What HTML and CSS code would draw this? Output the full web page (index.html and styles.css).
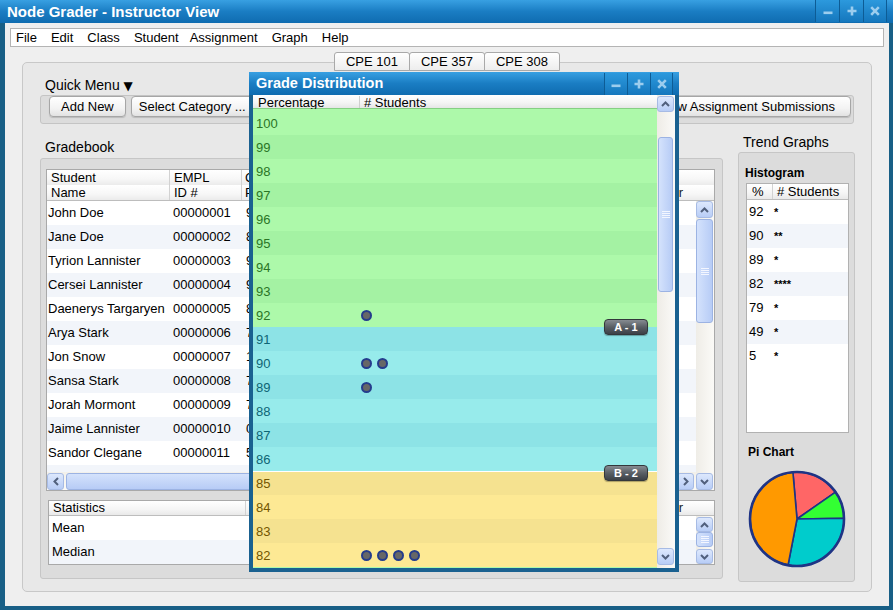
FILE: index.html
```html
<!DOCTYPE html>
<html>
<head>
<meta charset="utf-8">
<title>Node Grader - Instructor View</title>
<link rel="stylesheet" href="styles.css">
</head>
<body>
<div class="app">
  <div class="titlebar">
    <span class="title">Node Grader - Instructor View</span>
    <div class="winbtns">
      <span class="wb"><svg width="10" height="10" viewBox="0 0 10 10"><rect x="0.5" y="5.5" width="9" height="2.6" fill="#9ccdee"/></svg></span>
      <span class="wb"><svg width="10" height="10" viewBox="0 0 10 10"><path d="M5 0.5v9M0.5 5h9" stroke="#9ccdee" stroke-width="2.6"/></svg></span>
      <span class="wb"><svg width="10" height="10" viewBox="0 0 10 10"><path d="M1.2 1.2l7.6 7.6M8.8 1.2l-7.6 7.6" stroke="#9ccdee" stroke-width="2.6"/></svg></span>
    </div>
  </div>
  <div class="frame">
    <div class="menubar">
      <span>File</span><span>Edit</span><span>Class</span><span>Student</span><span class="m-assign">Assignment</span><span>Graph</span><span>Help</span>
    </div>
    <div class="tabs">
      <span class="tab">CPE 101</span><span class="tab">CPE 357</span><span class="tab">CPE 308</span>
    </div>
    <div class="panel">
      <div class="qm-label">Quick Menu <span class="tri">▼</span></div>
      <div class="qm-bar">
        <button class="btn">Add New</button>
        <button class="btn btn-cat">Select Category ...</button>
        <button class="btn btn-right">View Assignment Submissions</button>
      </div>
      <div class="columns">
        <div class="col-left">
          <div class="sec-label">Gradebook</div>
          <div class="gb-panel">
            <div class="grid">
              <div class="grid-head">
                <div class="hline"><span class="c-name">Student</span><span class="c-id">EMPL</span><span class="c-3">Course</span><span class="c-last"></span></div>
                <div class="hline hline2"><span class="c-name">Name</span><span class="c-id">ID #</span><span class="c-3">Percent</span><span class="c-last">Letter</span></div>
              </div>
              <div class="grid-body">
                <div class="rows-col">
                  <div class="rows">
                    <div class="row"><span class="r-name">John Doe</span><span class="r-id">00000001</span><span class="r-3">92</span></div>
                    <div class="row"><span class="r-name">Jane Doe</span><span class="r-id">00000002</span><span class="r-3">82</span></div>
                    <div class="row"><span class="r-name">Tyrion Lannister</span><span class="r-id">00000003</span><span class="r-3">90</span></div>
                    <div class="row"><span class="r-name">Cersei Lannister</span><span class="r-id">00000004</span><span class="r-3">90</span></div>
                    <div class="row"><span class="r-name">Daenerys Targaryen</span><span class="r-id">00000005</span><span class="r-3">82</span></div>
                    <div class="row"><span class="r-name">Arya Stark</span><span class="r-id">00000006</span><span class="r-3">79</span></div>
                    <div class="row"><span class="r-name">Jon Snow</span><span class="r-id">00000007</span><span class="r-3">100</span></div>
                    <div class="row"><span class="r-name">Sansa Stark</span><span class="r-id">00000008</span><span class="r-3">72</span></div>
                    <div class="row"><span class="r-name">Jorah Mormont</span><span class="r-id">00000009</span><span class="r-3">75</span></div>
                    <div class="row"><span class="r-name">Jaime Lannister</span><span class="r-id">00000010</span><span class="r-3">0</span></div>
                    <div class="row"><span class="r-name">Sandor Clegane</span><span class="r-id">00000011</span><span class="r-3">5</span></div>
                    <div class="row"></div>
                  </div>
                  <div class="hscroll">
                    <span class="arr arr-h"><svg width="6" height="9" viewBox="0 0 6 9"><polyline points="5,1 1.5,4.5 5,8" fill="none" stroke="#51607d" stroke-width="2"/></svg></span>
                    <span class="thumb hthumb"></span>
                    <span class="arr arr-h arr-right"><svg width="6" height="9" viewBox="0 0 6 9"><polyline points="1,1 4.5,4.5 1,8" fill="none" stroke="#51607d" stroke-width="2"/></svg></span>
                  </div>
                </div>
                <div class="vscroll">
                  <span class="arr"><svg width="9" height="6" viewBox="0 0 9 6"><polyline points="1,5 4.5,1.5 8,5" fill="none" stroke="#51607d" stroke-width="2"/></svg></span>
                  <span class="thumb vthumb"><span class="grip"></span></span>
                  <span class="arr arr-down"><svg width="9" height="6" viewBox="0 0 9 6"><polyline points="1,1 4.5,4.5 8,1" fill="none" stroke="#51607d" stroke-width="2"/></svg></span>
                </div>
              </div>
            </div>
            <div class="stats">
              <div class="stats-head"><span class="s-label">Statistics</span><span class="c-last">Letter</span></div>
              <div class="stats-body">
                <div class="stats-rows">
                  <div class="srow">Mean</div>
                  <div class="srow">Median</div>
                </div>
                <div class="svscroll">
                  <span class="arr arr-s"><svg width="9" height="6" viewBox="0 0 9 6"><polyline points="1,5 4.5,1.5 8,5" fill="none" stroke="#51607d" stroke-width="2"/></svg></span>
                  <span class="thumb sthumb"><span class="grip"></span></span>
                  <span class="arr arr-s arr-sdown"><svg width="9" height="6" viewBox="0 0 9 6"><polyline points="1,1 4.5,4.5 8,1" fill="none" stroke="#51607d" stroke-width="2"/></svg></span>
                </div>
              </div>
            </div>
          </div>
        </div>
        <div class="col-right">
          <div class="sec-label">Trend Graphs</div>
          <div class="tg-panel">
            <div class="tg-title">Histogram</div>
            <div class="hist">
              <div class="hist-head"><span class="h-pct">%</span><span class="h-num"># Students</span></div>
              <div class="hrow"><span class="h1">92</span><span class="h2">*</span></div>
              <div class="hrow"><span class="h1">90</span><span class="h2">**</span></div>
              <div class="hrow"><span class="h1">89</span><span class="h2">*</span></div>
              <div class="hrow"><span class="h1">82</span><span class="h2">****</span></div>
              <div class="hrow"><span class="h1">79</span><span class="h2">*</span></div>
              <div class="hrow"><span class="h1">49</span><span class="h2">*</span></div>
              <div class="hrow"><span class="h1">5</span><span class="h2">*</span></div>
            </div>
            <div class="tg-title pi-title">Pi Chart</div>
            <svg class="pie" width="100" height="100" viewBox="0 0 100 100">
              <g stroke="#1f3485" stroke-width="1.6" stroke-linejoin="round">
                <path d="M50 50 L45.9 3.18 A47 47 0 0 1 88.5 23.04 Z" fill="#ff6666"/>
                <path d="M50 50 L88.5 23.04 A47 47 0 0 1 97 49.18 Z" fill="#33ff33"/>
                <path d="M50 50 L97 49.18 A47 47 0 0 1 41.03 96.14 Z" fill="#00cccc"/>
                <path d="M50 50 L41.03 96.14 A47 47 0 0 1 45.9 3.18 Z" fill="#ff9900"/>
              </g>
              <circle cx="50" cy="50" r="47" fill="none" stroke="#1f3485" stroke-width="2.6"/>
            </svg>
          </div>
        </div>
      </div>
    </div>
  </div>

  <div class="dist">
    <div class="dist-title">
      <span class="dtitle">Grade Distribution</span>
      <div class="winbtns dbtns">
        <span class="wb"><svg width="10" height="10" viewBox="0 0 10 10"><rect x="0.5" y="5.5" width="9" height="2.6" fill="#9ccdee"/></svg></span>
        <span class="wb"><svg width="10" height="10" viewBox="0 0 10 10"><path d="M5 0.5v9M0.5 5h9" stroke="#9ccdee" stroke-width="2.6"/></svg></span>
        <span class="wb"><svg width="10" height="10" viewBox="0 0 10 10"><path d="M1.2 1.2l7.6 7.6M8.8 1.2l-7.6 7.6" stroke="#9ccdee" stroke-width="2.6"/></svg></span>
      </div>
    </div>
    <div class="dist-body">
      <div class="dist-main">
        <div class="dist-head"><span class="dh-pct">Percentage</span><span class="dh-num"># Students</span></div>
        <div class="dist-list">
          <div class="drow g l"><span class="pct">100</span></div>
          <div class="drow g d"><span class="pct">99</span></div>
          <div class="drow g l"><span class="pct">98</span></div>
          <div class="drow g d"><span class="pct">97</span></div>
          <div class="drow g l"><span class="pct">96</span></div>
          <div class="drow g d"><span class="pct">95</span></div>
          <div class="drow g l"><span class="pct">94</span></div>
          <div class="drow g d"><span class="pct">93</span></div>
          <div class="drow g l"><span class="pct">92</span><span class="dots"><span class="dot"></span></span></div>
          <div class="drow c d"><span class="pct">91</span></div>
          <div class="drow c l"><span class="pct">90</span><span class="dots"><span class="dot"></span><span class="dot"></span></span></div>
          <div class="drow c d"><span class="pct">89</span><span class="dots"><span class="dot"></span></span></div>
          <div class="drow c l"><span class="pct">88</span></div>
          <div class="drow c d"><span class="pct">87</span></div>
          <div class="drow c l"><span class="pct">86</span></div>
          <div class="drow y d ytop"><span class="pct">85</span></div>
          <div class="drow y l"><span class="pct">84</span></div>
          <div class="drow y d"><span class="pct">83</span></div>
          <div class="drow y l"><span class="pct">82</span><span class="dots"><span class="dot"></span><span class="dot"></span><span class="dot"></span><span class="dot"></span></span></div>
        </div>
        <span class="badge badge-a">A - 1</span>
        <span class="badge badge-b">B - 2</span>
      </div>
      <div class="dscroll">
        <span class="arr arr-d"><svg width="9" height="6" viewBox="0 0 9 6"><polyline points="1,5 4.5,1.5 8,5" fill="none" stroke="#51607d" stroke-width="2"/></svg></span>
        <span class="thumb dthumb"><span class="grip"></span></span>
        <span class="arr arr-d arr-ddown"><svg width="9" height="6" viewBox="0 0 9 6"><polyline points="1,1 4.5,4.5 8,1" fill="none" stroke="#51607d" stroke-width="2"/></svg></span>
      </div>
    </div>
  </div>
</div>
</body>
</html>
```

FILE: styles.css
```css
* { box-sizing: border-box; }

body {
  margin: 0;
  font-family: "Liberation Sans", Arial, sans-serif;
  font-size: 13px;
  color: #000;
}

.app {
  position: relative;
  width: 893px;
  height: 610px;
  background: #185f86;
  display: flex;
  flex-direction: column;
  overflow: hidden;
}

/* ---------- title bars ---------- */
.titlebar {
  height: 23px;
  flex: none;
  display: flex;
  align-items: flex-start;
  background: linear-gradient(#38a0e2, #1a7dc3 50%, #0f6cb0);
}
.title {
  flex: 1;
  color: #fff;
  font-weight: bold;
  font-size: 15px;
  line-height: 23px;
  padding-left: 7px;
}
.winbtns {
  display: flex;
  height: 22px;
  margin-right: 6px;
}
.wb {
  width: 24px;
  height: 22px;
  display: flex;
  align-items: center;
  justify-content: center;
  border-left: 1px solid #0d5c95;
  background: linear-gradient(#2c99dd, #1577bd);
}
.wb:last-child { border-right: 1px solid #0d5c95; }

/* ---------- frame ---------- */
.frame {
  flex: 1;
  margin: 0 4px 4px 5px;
  background: #efefef;
  padding-top: 5px;
}

.menubar {
  margin: 0 5px;
  height: 19px;
  border: 1px solid #b4b4b4;
  background: #fff;
  display: flex;
  align-items: center;
  padding-left: 5px;
  gap: 14px;
  font-size: 13px;
}
.m-assign { margin-left: -3px; }

.tabs {
  position: relative;
  z-index: 1;
  margin-top: 5px;
  height: 19px;
  padding-left: 329px;
  display: flex;
}
.tab {
  width: 76px;
  height: 19px;
  margin-right: -1px;
  border: 1px solid #a9a9a9;
  border-radius: 3px 3px 0 0;
  background: linear-gradient(#ffffff, #ededed);
  text-align: center;
  line-height: 18px;
  font-size: 13px;
}

.panel {
  margin: -9px 17px 0 17px;
  height: 530px;
  border: 1px solid #c8c8c8;
  border-radius: 5px;
  background: #e8e8e8;
  padding: 14px 17px 0 17px;
}

.qm-label {
  font-size: 14px;
  line-height: 16px;
  padding-left: 5px;
  white-space: nowrap;
}
.tri {
  font-family: "DejaVu Sans", sans-serif;
  font-size: 12px;
}
.qm-bar {
  margin-top: 1px;
  height: 29px;
  border: 1px solid #c4c4c4;
  border-radius: 3px;
  background: #dcdcdc;
  display: flex;
  align-items: flex-start;
  padding: 0 2px 0 8px;
  gap: 5px;
}
.btn {
  height: 21px;
  padding: 0 11px;
  border: 1px solid #a6a6a6;
  border-radius: 4px;
  background: linear-gradient(#ffffff, #f3f3f3 60%, #e2e2e2);
  box-shadow: 0 1px 1px rgba(0, 0, 0, 0.15);
  font-family: "Liberation Sans", Arial, sans-serif;
  font-size: 13px;
  line-height: 18px;
  color: #000;
  white-space: nowrap;
}
.btn-cat { padding: 0 10px 0 7px; }
.btn-right {
  margin-left: auto;
  padding: 0 15px;
}

.columns {
  display: flex;
  gap: 15px;
  align-items: flex-start;
}
.col-left { width: 683px; margin-top: 15px; flex: none; }
.col-right { width: 117px; margin-top: 10px; flex: none; }
.sec-label {
  font-size: 14px;
  line-height: 16px;
  padding-left: 5px;
  white-space: nowrap;
}

.gb-panel {
  margin-top: 3px;
  height: 421px;
  border: 1px solid #c6c6c6;
  border-radius: 3px;
  background: #dcdcdc;
  padding: 10px 7px 0 5px;
}

/* ---------- gradebook grid ---------- */
.grid {
  height: 322px;
  border: 1px solid #a9a9a9;
  background: #fff;
  display: flex;
  flex-direction: column;
}
.grid-head { height: 31px; flex: none; }
.hline {
  height: 15px;
  display: flex;
  background: linear-gradient(#ffffff, #f7f7f7 60%, #ebebeb);
  line-height: 15px;
  font-size: 13px;
  white-space: nowrap;
}
.hline2 { height: 16px; border-bottom: 1px solid #bdbdbd; }
.c-name { width: 123px; padding-left: 4px; border-right: 1px solid #d2d2d2; flex: none; }
.c-id { width: 72px; padding-left: 4px; border-right: 1px solid #d2d2d2; flex: none; }
.c-3 { width: 90px; padding-left: 3px; flex: none; }
.c-last { flex: 1; text-align: right; padding-right: 31px; color: #222; }

.grid-body { flex: 1; display: flex; min-height: 0; }
.rows-col { flex: 1; display: flex; flex-direction: column; min-width: 0; }
.rows { flex: 1; overflow: hidden; }
.row {
  height: 24px;
  line-height: 24px;
  display: flex;
  white-space: nowrap;
}
.row:nth-child(even) { background: #f2f5fa; }
.r-name { width: 124px; padding-left: 1px; flex: none; }
.r-id { width: 72px; padding-left: 2px; flex: none; }
.r-3 { padding-left: 3px; }

.hscroll {
  height: 18px;
  flex: none;
  display: flex;
  align-items: flex-start;
  padding-top: 1px;
  background: linear-gradient(#f2f0ea, #fbfaf7);
}
.hthumb { width: 440px; height: 17px; margin-left: 2px; }
.arr-right { margin-left: auto; margin-right: 2px; }

.vscroll {
  width: 18px;
  flex: none;
  display: flex;
  flex-direction: column;
  background: linear-gradient(to right, #efede7, #fbfaf7);
}
.vthumb { height: 104px; margin-top: 1px; width: 17px; }
.arr-down { margin-top: auto; }

/* scroll pieces */
.arr {
  width: 17px;
  height: 17px;
  flex: none;
  display: flex;
  align-items: center;
  justify-content: center;
  border: 1px solid #a7bbe4;
  border-radius: 3px;
  background: linear-gradient(#dde8fd, #b8cdf6);
}
.thumb {
  flex: none;
  display: flex;
  align-items: center;
  justify-content: center;
  border: 1px solid #9cb3e3;
  border-radius: 3px;
  background: linear-gradient(to right, #d4e2fc, #b7ccf6);
}
.hthumb { background: linear-gradient(#d4e2fc, #b7ccf6); }
.grip {
  width: 8px;
  height: 7px;
  background: repeating-linear-gradient(#f3f6ff 0 1px, transparent 1px 2px);
}

/* ---------- statistics ---------- */
.stats {
  margin: 9px 0 0 2px;
  height: 65px;
  border: 1px solid #a9a9a9;
  background: #fff;
  display: flex;
  flex-direction: column;
}
.stats-head {
  height: 15px;
  flex: none;
  display: flex;
  line-height: 14px;
  border-bottom: 1px solid #bdbdbd;
  background: linear-gradient(#ffffff, #f5f5f5 60%, #e9e9e9);
  white-space: nowrap;
}
.s-label { width: 197px; padding-left: 4px; border-right: 1px solid #d2d2d2; flex: none; }
.stats-head .c-last { padding-right: 31px; }
.stats-body { flex: 1; display: flex; }
.stats-rows { flex: 1; }
.srow { height: 24px; line-height: 24px; padding-left: 3px; }
.srow:nth-child(even) { background: #f2f5fa; }
.svscroll {
  width: 18px;
  display: flex;
  flex-direction: column;
  background: linear-gradient(to right, #efede7, #fbfaf7);
}
.arr-s { height: 15px; margin-top: 1px; }
.sthumb { height: 15px; width: 17px; }
.arr-sdown { margin-top: 2px; }

/* ---------- trend graphs ---------- */
.tg-panel {
  margin-top: 2px;
  height: 430px;
  border: 1px solid #c6c6c6;
  border-radius: 3px;
  background: #dcdcdc;
  padding: 0 5px 0 7px;
}
.tg-title {
  margin-top: 13px;
  margin-left: -1px;
  font-weight: bold;
  font-size: 12px;
  line-height: 14px;
  white-space: nowrap;
}
.hist {
  margin-top: 3px;
  width: 103px;
  height: 250px;
  border: 1px solid #b1b1b1;
  background: #fff;
}
.hist-head {
  height: 16px;
  display: flex;
  line-height: 15px;
  border-bottom: 1px solid #bdbdbd;
  background: linear-gradient(#ffffff, #f5f5f5 60%, #e9e9e9);
  white-space: nowrap;
}
.h-pct { width: 26px; padding-left: 5px; border-right: 1px solid #d2d2d2; flex: none; }
.h-num { padding-left: 4px; }
.hrow { height: 24px; line-height: 24px; display: flex; }
.hrow:nth-child(odd) { background: #f2f5fa; }
.h1 { width: 27px; padding-left: 2px; flex: none; }
.h2 { font-weight: bold; font-size: 11px; }
.pi-title { margin-top: 12px; margin-left: 2px; }
.pie { display: block; margin-top: 10px; margin-left: 1px; }

/* ---------- grade distribution window ---------- */
.dist {
  position: absolute;
  left: 249px;
  top: 72px;
  width: 430px;
  height: 500px;
  background: #1a6190;
  display: flex;
  flex-direction: column;
}
.dist-title {
  height: 23px;
  flex: none;
  display: flex;
  align-items: flex-start;
  background: linear-gradient(#38a0e2, #1a7dc3 50%, #0f6cb0);
}
.dtitle {
  flex: 1;
  color: #fff;
  font-weight: bold;
  font-size: 14.5px;
  line-height: 23px;
  padding-left: 7px;
}
.dbtns { margin-top: 1px; height: 22px; }
.dbtns .wb { width: 23px; height: 22px; }
.dist-body {
  flex: 1;
  margin: 0 4px 4px 4px;
  display: flex;
  background: #fff;
}
.dist-main {
  flex: 1;
  position: relative;
  display: flex;
  flex-direction: column;
}
.dist-head {
  height: 14px;
  flex: none;
  display: flex;
  line-height: 13px;
  padding-top: 1px;
  border-bottom: 1px solid #86cf84;
  background: linear-gradient(#ffffff, #f4f4f4 60%, #e6e6e6);
  white-space: nowrap;
}
.dh-pct { width: 107px; padding-left: 5px; border-right: 1px solid #cfcfcf; flex: none; }
.dh-num { padding-left: 4px; }
.dist-list {
  flex: 1;
  padding-top: 2px;
  background: #adf9aa;
}
.drow {
  height: 24px;
  display: flex;
  align-items: center;
}
.pct { width: 108px; padding-left: 3px; flex: none; }
.g { color: #2a7526; }
.c { color: #0e6575; }
.y { color: #735600; }
.g.l { background: #adf9aa; }
.g.d { background: #a4f2a3; }
.c.l { background: #97ebeb; }
.c.d { background: #8de3e6; }
.y.l { background: #fde994; }
.y.d { background: #f5e290; }
.ytop { box-shadow: inset 0 1px 0 #ffffff; }
.dots { display: flex; gap: 5px; }
.dot {
  width: 11px;
  height: 11px;
  border: 2px solid #253c8c;
  border-radius: 50%;
  background: #676767;
}
.badge {
  position: absolute;
  left: 351px;
  width: 44px;
  height: 16px;
  border: 1px solid #33373b;
  border-radius: 4px;
  background: linear-gradient(#868b91, #595f65 50%, #3c4147);
  box-shadow: 0 1px 1px rgba(0, 0, 0, 0.3);
  color: #fff;
  font-weight: bold;
  font-size: 11px;
  line-height: 14px;
  text-align: center;
}
.badge-a { top: 224px; }
.badge-b { top: 370px; }

.dscroll {
  width: 18px;
  flex: none;
  display: flex;
  flex-direction: column;
  background: linear-gradient(to right, #eeece6, #fbfaf8);
}
.arr-d { height: 16px; margin-top: 1px; }
.dthumb { height: 155px; width: 15px; margin-top: 25px; margin-left: 1px; }
.arr-ddown { margin-top: auto; margin-bottom: 3px; height: 17px; }
```
